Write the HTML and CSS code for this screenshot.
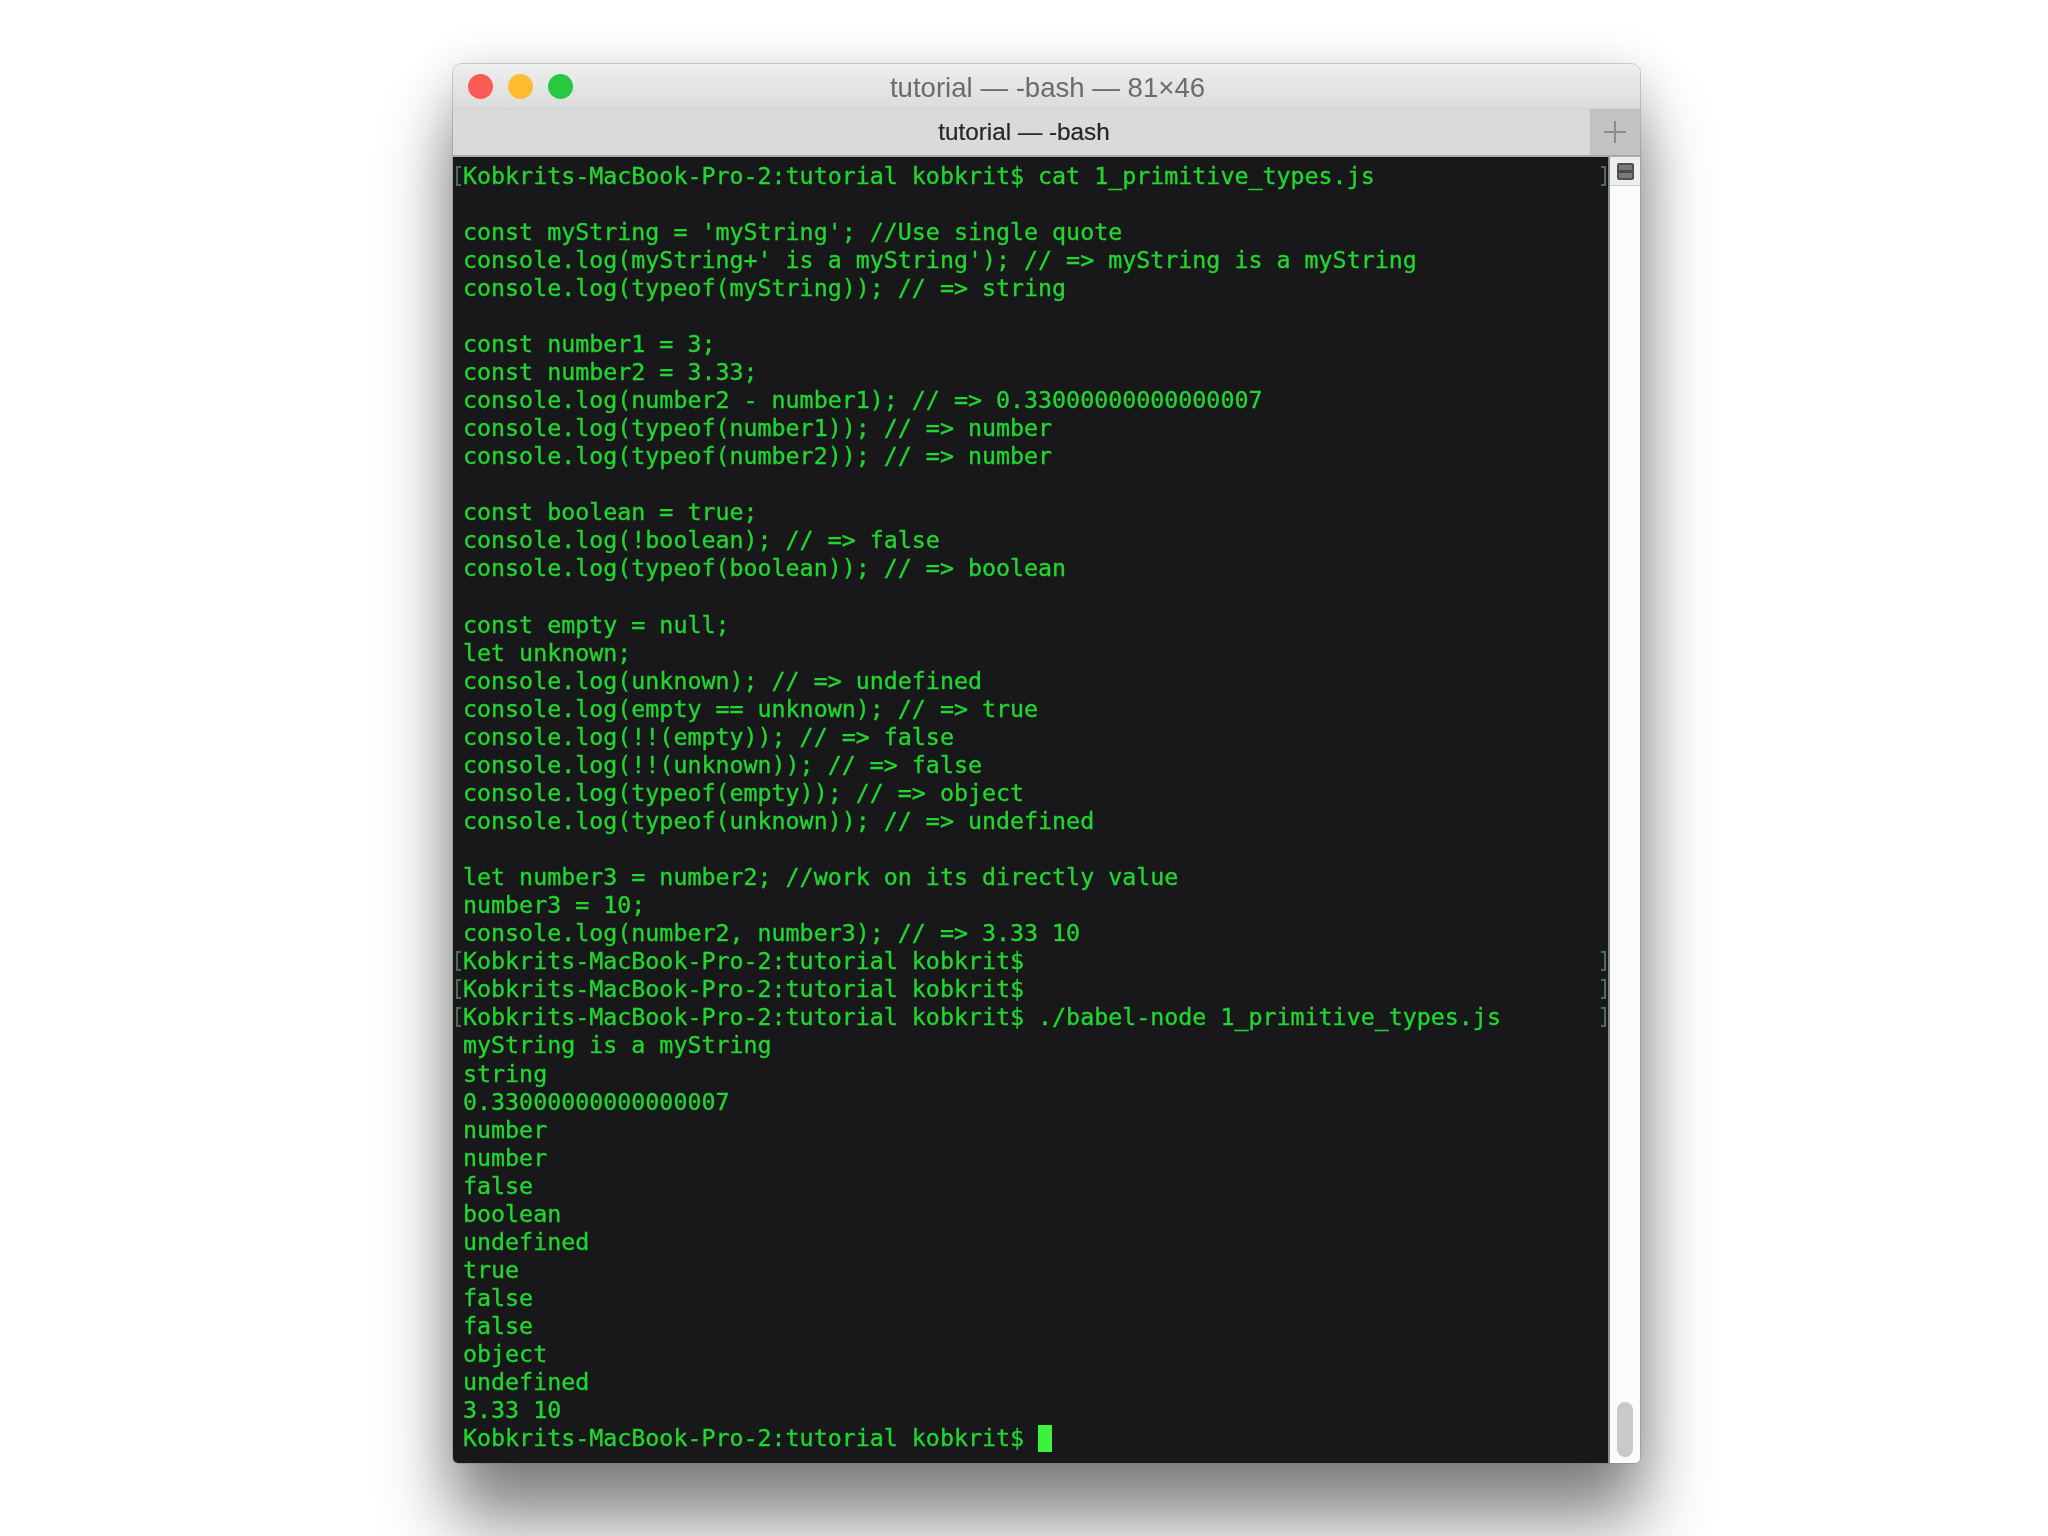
FILE: index.html
```html
<!DOCTYPE html>
<html lang="en">
<head>
<meta charset="utf-8">
<title>tutorial — -bash — 81×46</title>
<link rel="stylesheet" href="styles.css">
</head>
<body>
<main class="window">
  <header class="titlebar">
    <div class="lights">
      <span class="light red"></span>
      <span class="light yellow"></span>
      <span class="light green"></span>
    </div>
    <div class="title">tutorial — -bash — 81×46</div>
  </header>
  <div class="tabbar">
    <div class="tab">tutorial — -bash</div>
    <div class="newtab">
      <svg width="24" height="24" viewBox="0 0 24 24"><path d="M12 1v22M1 12h22" stroke="#8b8b8b" stroke-width="2" fill="none"/></svg>
    </div>
  </div>
  <div class="body">
    <section class="terminal">
<pre class="screen"><span class="mark"></span><span class="endmark"></span>Kobkrits-MacBook-Pro-2:tutorial kobkrit$ cat 1_primitive_types.js

const myString = 'myString'; //Use single quote
console.log(myString+' is a myString'); // =&gt; myString is a myString
console.log(typeof(myString)); // =&gt; string

const number1 = 3;
const number2 = 3.33;
console.log(number2 - number1); // =&gt; 0.33000000000000007
console.log(typeof(number1)); // =&gt; number
console.log(typeof(number2)); // =&gt; number

const boolean = true;
console.log(!boolean); // =&gt; false
console.log(typeof(boolean)); // =&gt; boolean

const empty = null;
let unknown;
console.log(unknown); // =&gt; undefined
console.log(empty == unknown); // =&gt; true
console.log(!!(empty)); // =&gt; false
console.log(!!(unknown)); // =&gt; false
console.log(typeof(empty)); // =&gt; object
console.log(typeof(unknown)); // =&gt; undefined

let number3 = number2; //work on its directly value
number3 = 10;
console.log(number2, number3); // =&gt; 3.33 10
<span class="mark"></span><span class="endmark"></span>Kobkrits-MacBook-Pro-2:tutorial kobkrit$
<span class="mark"></span><span class="endmark"></span>Kobkrits-MacBook-Pro-2:tutorial kobkrit$
<span class="mark"></span><span class="endmark"></span>Kobkrits-MacBook-Pro-2:tutorial kobkrit$ ./babel-node 1_primitive_types.js
myString is a myString
string
0.33000000000000007
number
number
false
boolean
undefined
true
false
false
object
undefined
3.33 10
Kobkrits-MacBook-Pro-2:tutorial kobkrit$ <span class="cursor"></span></pre>
    </section>
    <aside class="scrollbar">
      <div class="splitter"><span class="split-icon"></span></div>
      <div class="thumb"></div>
    </aside>
  </div>
</main>
</body>
</html>
```
FILE: styles.css
```css
* { box-sizing: border-box; }
html, body { margin: 0; background: #fff; }
body { height: 1536px; overflow: hidden; padding: 64px 408px 0 453px; }

.window {
  width: 1187px;
  height: 1399px;
  display: flex;
  flex-direction: column;
  border-radius: 9px 9px 5px 5px;
  background: #fafafa;
  outline: 1px solid rgba(120,120,120,.35);
  box-shadow: 0 58px 70px 2px rgba(0,0,0,.46), 0 6px 50px rgba(0,0,0,.16);
}

.titlebar {
  height: 45px;
  flex: none;
  position: relative;
  border-radius: 9px 9px 0 0;
  background: linear-gradient(#eeeeee, #dcdcdc);
  border-bottom: 1px solid #d2d2d2;
  display: flex;
  align-items: center;
  justify-content: center;
  filter: blur(.5px);
}
.lights { position: absolute; left: 15px; top: 10px; display: flex; gap: 15px; }
.light { width: 25px; height: 25px; border-radius: 50%; }
.red { background: #fc5a55; }
.yellow { background: #fdbc2e; }
.green { background: #28c83f; }
.title {
  font: 27.6px/1 "Liberation Sans", Arial, sans-serif;
  color: #6c6c6c;
  padding: 4px 0 0 2px;
}

.tabbar {
  height: 48px;
  flex: none;
  display: flex;
  background: #dadada;
  border-bottom: 2px solid #a9a9a9;
  filter: blur(.5px);
}
.tab {
  flex: 1;
  display: flex;
  align-items: center;
  justify-content: center;
  font: 24.3px/1 "Liberation Sans", Arial, sans-serif;
  color: #262626;
  -webkit-text-stroke: .2px #262626;
  padding: 1px 0 0 5px;
}
.newtab {
  width: 50px;
  background: #c2c2c2;
  display: flex;
  align-items: center;
  justify-content: center;
}

.body { flex: 1; display: flex; min-height: 0; }
.terminal {
  flex: 1;
  background: #18181a;
  border-radius: 0 0 0 5px;
  position: relative;
  overflow: hidden;
}
.screen {
  margin: 0;
  padding: 4.5px 0 0 10px;
  font: 23.3px/28.07px "DejaVu Sans Mono", monospace;
  color: #22d630;
  -webkit-text-stroke: .35px #22d630;
  filter: blur(.6px);
  position: relative;
}
.mark, .endmark {
  position: absolute;
  width: 5px;
  height: 20px;
  margin-top: 4px;
  border: 2px solid #4b6f50;
}
.mark { left: 3px; border-right: 0; }
.endmark { right: 2px; border-left: 0; }
.cursor {
  display: inline-block;
  width: 14px;
  height: 27px;
  background: #3cf23c;
  vertical-align: -6px;
}

.scrollbar {
  width: 32px;
  flex: none;
  background: #fbfafc;
  border-left: 2px solid #8c8c8c;
  border-radius: 0 0 5px 0;
  display: flex;
  flex-direction: column;
  justify-content: space-between;
  filter: blur(.4px);
}
.splitter {
  height: 29px;
  background: #eeeeee;
  border-bottom: 1px solid #c9c9c9;
  display: flex;
  align-items: center;
  justify-content: center;
}
.split-icon {
  width: 17px;
  height: 17px;
  border: 2px solid #505050;
  border-radius: 2px;
  background: linear-gradient(#7a7a7a 0 42%, #4a4a4a 42% 58%, #7a7a7a 58%);
}
.thumb {
  width: 16px;
  height: 55px;
  margin: 0 0 6px 7px;
  border-radius: 8px;
  background: #c9c8ca;
}
```
